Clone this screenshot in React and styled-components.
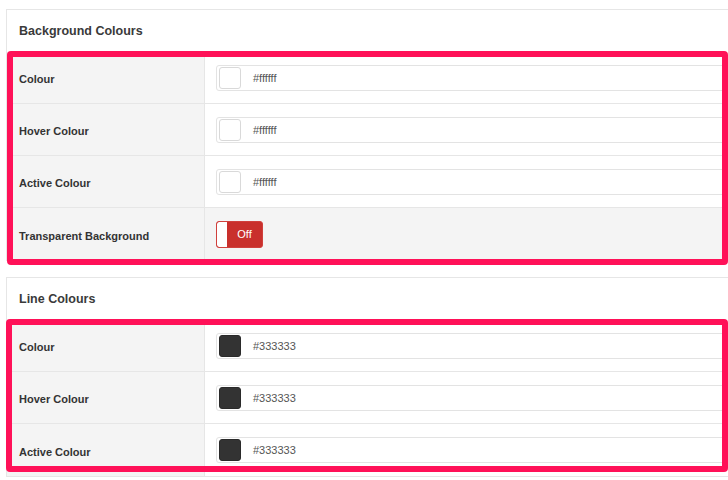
import React from "react";
import styled, { createGlobalStyle } from "styled-components";

const GlobalStyle = createGlobalStyle`
  html, body {
    margin: 0;
    padding: 0;
    background: #ffffff;
    overflow: hidden;
  }
  body {
    font-family: "Liberation Sans", Arial, sans-serif;
    color: #333333;
  }
`;

const Page = styled.div`
  display: flex;
  flex-direction: column;
  gap: 16px;
  padding: 9px 0 0 6px;
`;

const Panel = styled.section`
  width: 722px;
  box-sizing: border-box;
  border: 1px solid #e6e6e6;
  border-right: none;
  background: #ffffff;
`;

const PanelHeader = styled.h3`
  margin: 0;
  height: 42px;
  display: flex;
  align-items: center;
  padding-left: 12px;
  font-size: 12.5px;
  font-weight: 700;
  color: #3a3a3a;
`;

const RowGroup = styled.div`
  position: relative;

  &::after {
    content: "";
    position: absolute;
    top: ${(p) => p.$top}px;
    bottom: ${(p) => p.$bottom}px;
    left: ${(p) => p.$left}px;
    right: 0;
    box-sizing: border-box;
    border: 6px solid #ff1158;
    border-radius: 4px;
    pointer-events: none;
  }
`;

const Row = styled.div`
  display: flex;
  height: 52px;
  box-sizing: border-box;
  border-bottom: 1px solid #e6e6e6;
  background: ${(p) => (p.$shaded ? "#f4f4f4" : "#ffffff")};

  &:last-child {
    border-bottom: none;
  }
`;

const LabelCell = styled.div`
  width: 198px;
  flex: none;
  box-sizing: border-box;
  display: flex;
  align-items: center;
  padding: 3px 0 0 12px;
  background: #f4f4f4;
  border-right: 1px solid #e6e6e6;
  font-size: 11px;
  font-weight: 700;
  color: #333333;
`;

const ValueCell = styled.div`
  flex: 1;
  display: flex;
  align-items: center;
  padding-left: 11px;
`;

const ColorInput = styled.div`
  width: calc(100% + 4px);
  height: 26px;
  box-sizing: border-box;
  display: flex;
  align-items: center;
  padding-left: 2px;
  border: 1px solid #e3e3e3;
  border-radius: 3px;
  background: #ffffff;
`;

const Swatch = styled.span`
  width: 22px;
  height: 22px;
  box-sizing: border-box;
  border: 1px solid ${(p) => (p.$dark ? "#2a2a2a" : "#d9d9d9")};
  border-radius: 3px;
  background: ${(p) => p.$color};
`;

const HexText = styled.span`
  margin-left: 12px;
  font-size: 11px;
  color: #555555;
`;

const Toggle = styled.div`
  width: 47px;
  height: 27px;
  box-sizing: border-box;
  display: flex;
  border: 1px solid #d0403c;
  border-radius: 3px;
  background: #c9302c;
  overflow: hidden;
`;

const Knob = styled.span`
  width: 10px;
  background: #ffffff;
  border-radius: 2px 0 0 2px;
`;

const ToggleLabel = styled.span`
  flex: 1;
  display: flex;
  align-items: center;
  justify-content: center;
  font-size: 11px;
  color: #ffffff;
`;

function ColorRow({ label, color, dark }) {
  return (
    <Row>
      <LabelCell>{label}</LabelCell>
      <ValueCell>
        <ColorInput>
          <Swatch $color={color} $dark={dark} />
          <HexText>{color}</HexText>
        </ColorInput>
      </ValueCell>
    </Row>
  );
}

export default function App() {
  return (
    <>
      <GlobalStyle />
      <Page>
        <Panel>
          <PanelHeader>Background Colours</PanelHeader>
          <RowGroup $top={-1} $bottom={-5} $left={0}>
            <ColorRow label="Colour" color="#ffffff" />
            <ColorRow label="Hover Colour" color="#ffffff" />
            <ColorRow label="Active Colour" color="#ffffff" />
            <Row $shaded>
              <LabelCell>Transparent Background</LabelCell>
              <ValueCell>
                <Toggle>
                  <Knob />
                  <ToggleLabel>Off</ToggleLabel>
                </Toggle>
              </ValueCell>
            </Row>
          </RowGroup>
        </Panel>
        <Panel>
          <PanelHeader>Line Colours</PanelHeader>
          <RowGroup $top={-1} $bottom={4} $left={-1}>
            <ColorRow label="Colour" color="#333333" dark />
            <ColorRow label="Hover Colour" color="#333333" dark />
            <ColorRow label="Active Colour" color="#333333" dark />
          </RowGroup>
        </Panel>
      </Page>
    </>
  );
}
